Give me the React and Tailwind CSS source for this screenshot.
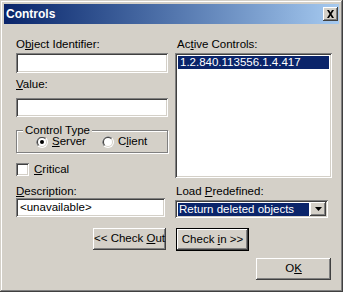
import React from 'react';

const sunken =
  'bg-white shadow-[inset_1px_1px_0_#808080,inset_-1px_-1px_0_#ffffff,inset_2px_2px_0_#404040,inset_-2px_-2px_0_#d4d0c8]';
const raised =
  'bg-[#d4d0c8] shadow-[inset_-1px_-1px_0_#404040,inset_1px_1px_0_#ffffff,inset_-2px_-2px_0_#808080,inset_2px_2px_0_#d4d0c8]';

const Radio = ({ checked }) => (
  <svg width="12" height="12" viewBox="0 0 12 12" className="shrink-0">
    <circle cx="6" cy="6" r="6" fill="#ffffff" />
    <path d="M1.76 10.24 A6 6 0 0 1 10.24 1.76 L6 6Z" fill="#808080" />
    <circle cx="6" cy="6" r="5" fill="#d4d0c8" />
    <path d="M2.46 9.54 A5 5 0 0 1 9.54 2.46 L6 6Z" fill="#404040" />
    <circle cx="6" cy="6" r="4" fill="#ffffff" />
    {checked && <circle cx="6" cy="6" r="2" fill="#000000" />}
  </svg>
);

const Button = ({ className, children }) => (
  <div className={`${raised} flex items-center justify-center ${className}`}>
    <span>{children}</span>
  </div>
);

export default function App() {
  return (
    <div className="w-[347px] h-[299px] bg-white font-['Liberation_Sans',Arial,sans-serif] text-[11.5px] text-black">
      <div className="w-[343px] h-[292px] bg-[#d4d0c8] p-[4px] flex flex-col shadow-[inset_-1px_-1px_0_#404040,inset_1px_1px_0_#d4d0c8,inset_-2px_-2px_0_#808080,inset_2px_2px_0_#ffffff]">
        {/* title bar */}
        <div className="h-[20px] flex items-center bg-gradient-to-r from-[#0a246a] to-[#a6caf0] pl-[2px] pr-[1px]">
          <span className="text-white font-bold text-[12px] leading-none">Controls</span>
          <div className={`${raised} ml-auto w-[15px] h-[14px] flex items-center justify-center`}>
            <svg width="9" height="8" viewBox="0 0 9 8">
              <path d="M1 0h2l1.5 2.5L6 0h2L5.5 4 8 8H6L4.5 5.5 3 8H1l2.5-4z" fill="#000" />
            </svg>
          </div>
        </div>

        <div className="flex-1 pl-[12px] pt-[13px]">
          <div className="flex gap-[7px]">
            {/* left column */}
            <div className="w-[152px] flex flex-col">
              <div className="h-[16px] leading-[14px]">
                O<u>b</u>ject Identifier:
              </div>
              <div className={`${sunken} h-[20px]`} />
              <div className="h-[25px] pt-[4px] leading-[14px]">
                <u>V</u>alue:
              </div>
              <div className={`${sunken} h-[19px]`} />
              <div className="relative mt-[13px] h-[23px] border border-[#808080] shadow-[inset_1px_1px_0_#ffffff,1px_1px_0_#ffffff] flex items-center pl-[19px]">
                <span className="absolute -top-[8px] left-[6px] bg-[#d4d0c8] px-[2px] leading-[14px]">
                  Control Type
                </span>
                <div className="flex items-center gap-[4px] mt-[1px]">
                  <Radio checked />
                  <span>
                    <u>S</u>erver
                  </span>
                </div>
                <div className="flex items-center gap-[4px] ml-[16px] mt-[1px]">
                  <Radio />
                  <span>
                    C<u>l</u>ient
                  </span>
                </div>
              </div>
              <div className="mt-[10px] flex items-center gap-[5px] h-[13px]">
                <div className={`${sunken} w-[13px] h-[13px]`} />
                <span>
                  <u>C</u>ritical
                </span>
              </div>
              <div className="h-[22px] pt-[8px] leading-[14px]">
                <u>D</u>escription:
              </div>
              <div className={`${sunken} h-[19px] w-[149px] flex items-center pl-[4px]`}>
                <span>&lt;unavailable&gt;</span>
              </div>
            </div>

            {/* right column */}
            <div className="w-[157px] flex flex-col">
              <div className="h-[16px] leading-[14px] pl-[2px]">
                Ac<u>t</u>ive Controls:
              </div>
              <div className={`${sunken} h-[125px] p-[3px]`}>
                <div className="h-[13px] bg-[#0a246a] text-white leading-[13px] pl-[2px]">
                  1.2.840.113556.1.4.417
                </div>
              </div>
              <div className="h-[22px] pt-[6px] leading-[14px] pl-[1px]">
                Load <u>P</u>redefined:
              </div>
              <div className={`${sunken} h-[18px] w-[153px] flex items-center p-[2px]`}>
                <div className="flex-1 h-[13px] ml-[1px] mr-[1px] bg-[#0a246a] text-white leading-[13px] pl-[1px]">
                  Return deleted objects
                </div>
                <div className={`${raised} w-[16px] h-[14px] flex items-center justify-center`}>
                  <svg width="7" height="4" viewBox="0 0 7 4">
                    <path d="M0 0h7L3.5 4z" fill="#000" />
                  </svg>
                </div>
              </div>
            </div>
          </div>

          {/* check buttons */}
          <div className="flex items-start gap-[10px] mt-[10px] ml-[77px]">
            <Button className="w-[73px] h-[22px]">
              &lt;&lt; Check <u>O</u>ut
            </Button>
            <div className="border border-black">
              <Button className="w-[71px] h-[21px]">
                Check <u>i</u>n &gt;&gt;
              </Button>
            </div>
          </div>

          {/* OK */}
          <div className="mt-[7px] ml-[240px]">
            <Button className="w-[75px] h-[22px]">
              O<u>K</u>
            </Button>
          </div>
        </div>
      </div>
    </div>
  );
}
